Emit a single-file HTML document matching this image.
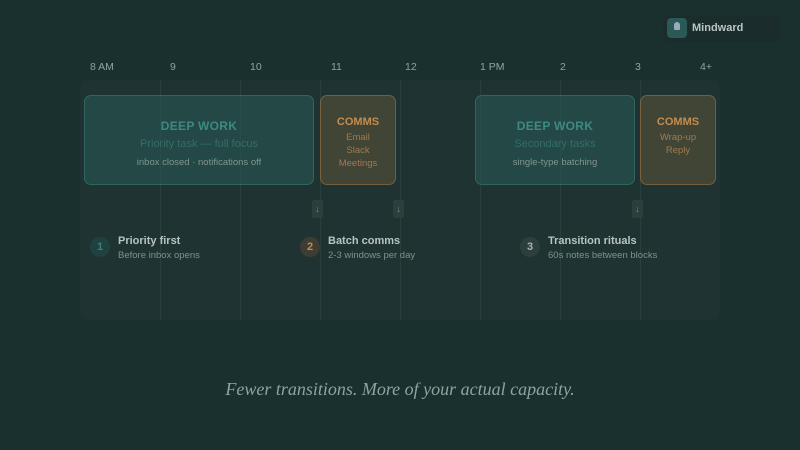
<!DOCTYPE html>
<html><head><style>
*{margin:0;padding:0;box-sizing:border-box}
body{width:800px;height:450px;background:#19302f;font-family:"Liberation Sans",sans-serif;position:relative;overflow:hidden}
.a{position:absolute}
.lbl{position:absolute;top:61px;font-size:10.5px;color:#8fa3a0}
.panel{left:80px;top:80px;width:640px;height:240px;background:#1f3432;border-radius:10px}
.vl{position:absolute;top:80px;height:240px;width:1px;background:#2a403d}
.dw{background:rgba(38,90,86,.55);border:1px solid rgba(60,125,118,.55);border-radius:7px;text-align:center}
.cm{background:rgba(100,85,55,.5);border:1px solid rgba(150,115,65,.6);border-radius:7px;text-align:center}
.t1{font-size:12px;font-weight:bold;color:#3d8a81;letter-spacing:.3px}
.t2{font-size:11px;color:#336e67}
.t3{font-size:9.5px;color:#83958f}
.c1{font-size:11px;font-weight:bold;color:#c58c4e}
.c2{font-size:9.5px;color:#a07a50;line-height:13px}
.arr{width:11px;height:18px;background:#2b3f3d;border-radius:2px;color:#7d8f8c;font-size:9px;text-align:center;line-height:18px}
.num{width:20px;height:20px;border-radius:50%;font-size:11px;font-weight:bold;text-align:center;line-height:20px}
.h{font-size:11px;font-weight:bold;color:#b8c4c1}
.s{font-size:9.5px;color:#7e918e;margin-top:3px}
</style></head><body>
<div class="a" style="left:663px;top:15px;width:117px;height:27px;background:#1b2c2c;border-radius:6px"></div>
<div class="a" style="left:667px;top:18px;width:20px;height:20px;background:#2b5a56;border-radius:4px"></div>
<div class="a" style="left:674px;top:22px;width:6px;height:8px;background:#9ab;border-radius:3px 3px 1px 1px"></div>
<div class="a" style="left:692px;top:22px;font-size:11px;font-weight:bold;color:#b9c6c3">Mindward</div>
<div class="lbl" style="left:90px">8 AM</div><div class="lbl" style="left:170px">9</div><div class="lbl" style="left:250px">10</div><div class="lbl" style="left:331px">11</div><div class="lbl" style="left:405px">12</div><div class="lbl" style="left:480px">1 PM</div><div class="lbl" style="left:560px">2</div><div class="lbl" style="left:635px">3</div><div class="lbl" style="left:700px">4+</div>
<div class="a panel"></div>
<div class="vl" style="left:160px"></div><div class="vl" style="left:240px"></div><div class="vl" style="left:320px"></div><div class="vl" style="left:400px"></div><div class="vl" style="left:480px"></div><div class="vl" style="left:560px"></div><div class="vl" style="left:640px"></div>
<div class="a dw" style="left:84px;top:95px;width:230px;height:90px;padding-top:23px"><div class="t1">DEEP WORK</div><div class="t2" style="margin-top:5px">Priority task — full focus</div><div class="t3" style="margin-top:7px">inbox closed · notifications off</div></div>
<div class="a cm" style="left:320px;top:95px;width:76px;height:90px;padding-top:20px"><div class="c1">COMMS</div><div class="c2" style="margin-top:3px">Email<br>Slack<br>Meetings</div></div>
<div class="a dw" style="left:475px;top:95px;width:160px;height:90px;padding-top:23px"><div class="t1">DEEP WORK</div><div class="t2" style="margin-top:5px">Secondary tasks</div><div class="t3" style="margin-top:7px">single-type batching</div></div>
<div class="a cm" style="left:640px;top:95px;width:76px;height:90px;padding-top:20px"><div class="c1">COMMS</div><div class="c2" style="margin-top:3px">Wrap-up<br>Reply</div></div>
<div class="a arr" style="left:312px;top:200px">↓</div><div class="a arr" style="left:393px;top:200px">↓</div><div class="a arr" style="left:632px;top:200px">↓</div>
<div class="a num" style="left:90px;top:237px;background:#1f4240;color:#3a7f77">1</div>
<div class="a" style="left:118px;top:235px"><div class="h">Priority first</div><div class="s">Before inbox opens</div></div>
<div class="a num" style="left:300px;top:237px;background:#3d3d33;color:#c48c4e">2</div>
<div class="a" style="left:328px;top:235px"><div class="h">Batch comms</div><div class="s">2-3 windows per day</div></div>
<div class="a num" style="left:520px;top:237px;background:#2d3f3d;color:#a6b3b0">3</div>
<div class="a" style="left:548px;top:235px"><div class="h">Transition rituals</div><div class="s">60s notes between blocks</div></div>
<div class="a" style="left:0;width:800px;top:379px;text-align:center;font-family:'Liberation Serif',serif;font-style:italic;font-size:18px;color:#8fa3a0">Fewer transitions. More of your actual capacity.</div>
</body></html>
